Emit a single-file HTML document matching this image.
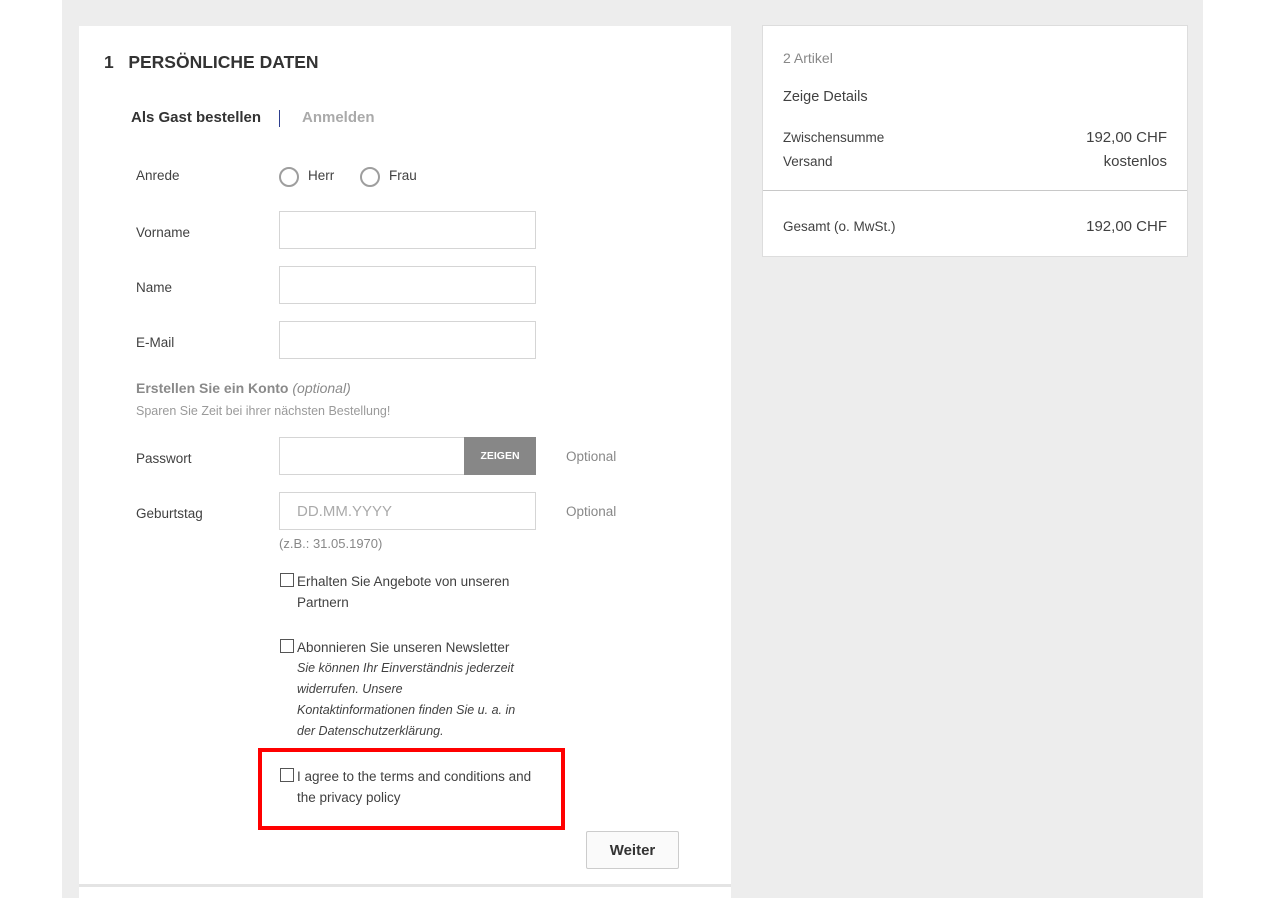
<!DOCTYPE html>
<html><head><meta charset="utf-8"><style>
*{margin:0;padding:0;box-sizing:border-box}
body{width:1266px;height:898px;position:relative;background:#fff;font-family:"Liberation Sans",sans-serif;color:#414141;overflow:hidden}
.a{position:absolute;white-space:nowrap}
.bg{position:absolute;left:62px;top:0;width:1141px;height:898px;background:#ededed}
.card{position:absolute;background:#fff}
.inp{position:absolute;width:257px;height:38px;border:1px solid #d5d5d5;background:#fff}
.lbl{font-size:13.5px}
.radio{position:absolute;width:20px;height:20px;border:2px solid #9e9e9e;border-radius:50%}
.cb{position:absolute;width:14px;height:14px;border:1px solid #555;background:#fff}
.t{font-size:13.5px;line-height:21px}
</style></head><body>
<div class="bg"></div>
<div class="card" style="left:79px;top:26px;width:652px;height:858px"></div>
<div class="a" style="left:79px;top:884px;width:652px;height:3px;background:#e4e4e4"></div>
<div class="card" style="left:79px;top:887px;width:652px;height:11px"></div>
<div class="a" style="left:104px;top:52px;font-size:17.5px;font-weight:bold;color:#333">1&nbsp;&nbsp;&nbsp;PERSÖNLICHE DATEN</div>
<div class="a" style="left:131px;top:109px;font-size:15px;font-weight:bold;color:#333">Als Gast bestellen</div>
<div class="a" style="left:279px;top:110px;width:1px;height:17px;background:#2d3e8e"></div>
<div class="a" style="left:302px;top:109px;font-size:15px;font-weight:bold;color:#aaa">Anmelden</div>
<div class="a lbl" style="left:136px;top:168px">Anrede</div>
<div class="radio" style="left:279px;top:167px"></div>
<div class="a lbl" style="left:308px;top:168px">Herr</div>
<div class="radio" style="left:360px;top:167px"></div>
<div class="a lbl" style="left:389px;top:168px">Frau</div>
<div class="a lbl" style="left:136px;top:225px">Vorname</div><div class="inp" style="left:279px;top:211px"></div>
<div class="a lbl" style="left:136px;top:280px">Name</div><div class="inp" style="left:279px;top:266px"></div>
<div class="a lbl" style="left:136px;top:335px">E-Mail</div><div class="inp" style="left:279px;top:321px"></div>
<div class="a" style="left:136px;top:380px;font-size:14px;font-weight:bold;color:#8a8a8a">Erstellen Sie ein Konto <i style="font-weight:normal">(optional)</i></div>
<div class="a" style="left:136px;top:404px;font-size:12.5px;color:#9a9a9a">Sparen Sie Zeit bei ihrer nächsten Bestellung!</div>
<div class="a lbl" style="left:136px;top:451px">Passwort</div>
<div class="inp" style="left:279px;top:437px;width:186px"></div>
<div class="a" style="left:464px;top:437px;width:72px;height:38px;background:#878787;color:#fff;font-size:10.5px;font-weight:bold;text-align:center;line-height:38px">ZEIGEN</div>
<div class="a lbl" style="left:566px;top:449px;color:#888">Optional</div>
<div class="a lbl" style="left:136px;top:506px">Geburtstag</div>
<div class="inp" style="left:279px;top:492px"></div>
<div class="a" style="left:297px;top:503px;font-size:15px;color:#aaa">DD.MM.YYYY</div>
<div class="a lbl" style="left:566px;top:504px;color:#888">Optional</div>
<div class="a" style="left:279px;top:536px;font-size:13px;color:#888">(z.B.: 31.05.1970)</div>
<div class="cb" style="left:280px;top:573px"></div>
<div class="a t" style="left:297px;top:571px">Erhalten Sie Angebote von unseren<br>Partnern</div>
<div class="cb" style="left:280px;top:639px"></div>
<div class="a t" style="left:297px;top:637px">Abonnieren Sie unseren Newsletter</div>
<div class="a" style="left:297px;top:658px;font-size:12.5px;font-style:italic;line-height:21px">Sie können Ihr Einverständnis jederzeit<br>widerrufen. Unsere<br>Kontaktinformationen finden Sie u. a. in<br>der Datenschutzerklärung.</div>
<div class="a" style="left:258px;top:748px;width:307px;height:82px;border:4px solid #f00"></div>
<div class="cb" style="left:280px;top:768px"></div>
<div class="a t" style="left:297px;top:766px">I agree to the terms and conditions and<br>the privacy policy</div>
<div class="a" style="left:586px;top:831px;width:93px;height:38px;border:1px solid #ccc;border-radius:2px;background:#fafafa;font-size:15px;font-weight:bold;color:#333;text-align:center;line-height:38px">Weiter</div>
<div class="card" style="left:762px;top:25px;width:426px;height:232px;border:1px solid #ddd"></div>
<div class="a" style="left:763px;top:190px;width:424px;height:1px;background:#c8c8c8"></div>
<div class="a" style="left:783px;top:50px;font-size:14px;color:#888">2 Artikel</div>
<div class="a" style="left:783px;top:89px;font-size:14.5px">Zeige Details</div>
<div class="a" style="left:783px;top:130px;font-size:13.5px">Zwischensumme</div>
<div class="a" style="left:783px;top:154px;font-size:13.5px">Versand</div>
<div class="a" style="right:99px;top:129px;font-size:15px">192,00 CHF</div>
<div class="a" style="right:99px;top:153px;font-size:15px">kostenlos</div>
<div class="a" style="left:783px;top:219px;font-size:13.5px">Gesamt (o. MwSt.)</div>
<div class="a" style="right:99px;top:218px;font-size:15px">192,00 CHF</div>
</body></html>
